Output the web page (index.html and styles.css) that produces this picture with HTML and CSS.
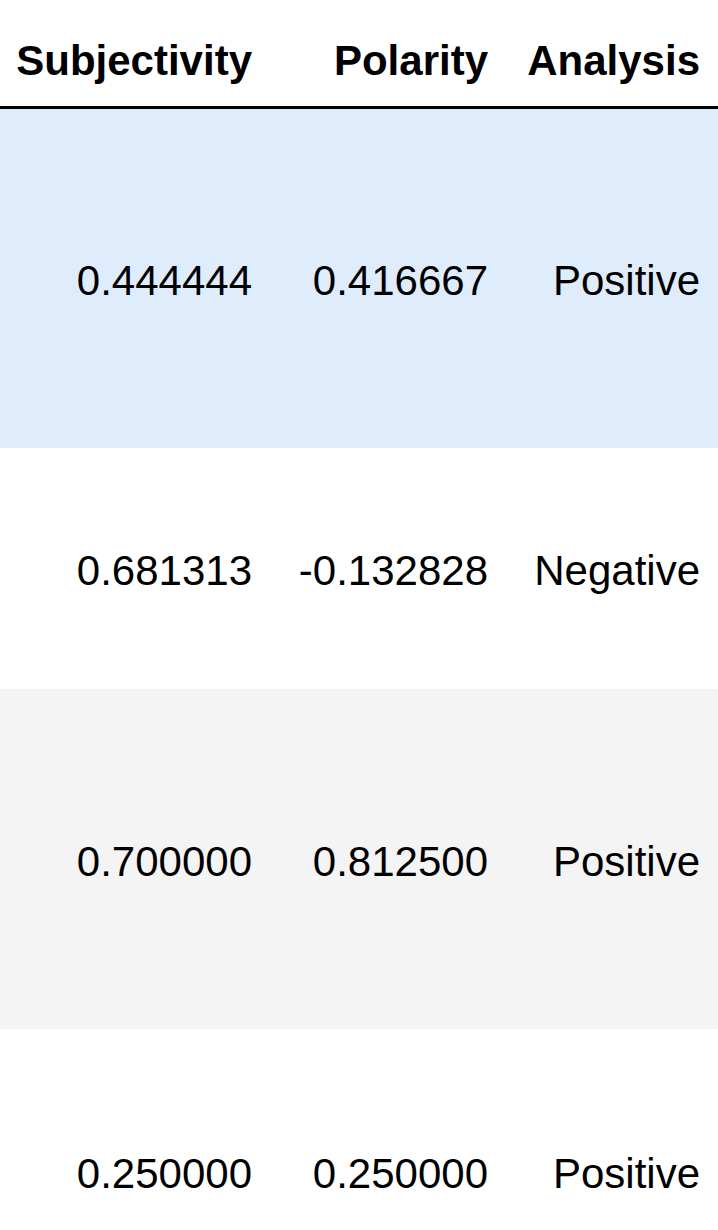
FILE: index.html
```html
<!DOCTYPE html>
<html>
<head>
<meta charset="utf-8">
<link rel="stylesheet" href="styles.css">
</head>
<body>
<table class="df">
  <colgroup>
    <col class="c1">
    <col class="c2">
    <col class="c3">
  </colgroup>
  <thead>
    <tr class="head">
      <th>Subjectivity</th>
      <th>Polarity</th>
      <th>Analysis</th>
    </tr>
  </thead>
  <tbody>
    <tr class="r1 hover">
      <td>0.444444</td>
      <td>0.416667</td>
      <td>Positive</td>
    </tr>
    <tr class="r2">
      <td>0.681313</td>
      <td>-0.132828</td>
      <td>Negative</td>
    </tr>
    <tr class="r3 odd">
      <td>0.700000</td>
      <td>0.812500</td>
      <td>Positive</td>
    </tr>
    <tr class="r4">
      <td>0.250000</td>
      <td>0.250000</td>
      <td>Positive</td>
    </tr>
  </tbody>
</table>
</body>
</html>
```

FILE: styles.css
```css
html, body {
  margin: 0;
  padding: 0;
  background: #ffffff;
}

body {
  width: 718px;
  height: 1230px;
  overflow: hidden;
  font-family: "Liberation Sans", Arial, sans-serif;
  color: #000;
}

.df {
  border-collapse: collapse;
  table-layout: fixed;
  width: 718px;
  font-size: 42px;
  line-height: 48px;
}

.c1 { width: 270px; }
.c2 { width: 236px; }
.c3 { width: 212px; }

.df th,
.df td {
  text-align: right;
  padding: 0 18px 0 0;
  white-space: nowrap;
}

.df th {
  font-weight: bold;
  vertical-align: bottom;
  padding-top: 37px;
  padding-bottom: 21px;
}

.head {
  border-bottom: 3px solid #000;
}

.df td {
  vertical-align: middle;
  padding-top: 6px;
}

.r1 { height: 340px; }
.r2 { height: 241px; }
.r3 { height: 340px; }
.r4 { height: 200px; }

.r4 td {
  vertical-align: bottom;
  padding-top: 0;
  padding-bottom: 31px;
}

.hover { background: #dfecfc; }
.odd { background: #f4f4f4; }
```
